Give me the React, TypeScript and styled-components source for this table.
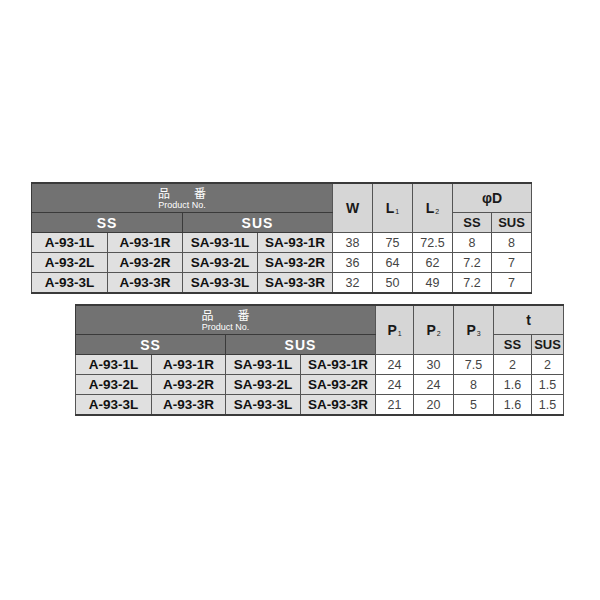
import styled, { createGlobalStyle } from "styled-components";

const GlobalStyle = createGlobalStyle`
  html, body {
    margin: 0;
    padding: 0;
    background: #ffffff;
  }
  body {
    font-family: "Liberation Sans", Arial, "Noto Sans CJK JP", sans-serif;
  }
`;

const Page = styled.div`
  width: 600px;
  height: 600px;
  padding: 182px 0 0 31px;
  box-sizing: border-box;
  display: flex;
  flex-direction: column;
  align-items: flex-start;
  gap: 10px;
`;

const Table = styled.table<{ $indent?: number; $width: number }>`
  border-collapse: collapse;
  table-layout: fixed;
  width: ${(p) => p.$width}px;
  margin-left: ${(p) => p.$indent ?? 0}px;
  border-top: 2px solid #3a3a3a;
  border-bottom: 2px solid #3a3a3a;
  border-right: 1px solid #555;
`;

const DarkHead = styled.th<{ $h?: number }>`
  background: #727272;
  color: #fff;
  height: ${(p) => p.$h ?? 19}px;
  padding: 0;
  font-weight: bold;
  font-size: 14px;
  letter-spacing: 1px;
  border-bottom: 1px solid #3a3a3a;
  border-left: 1px solid #3a3a3a;
  text-align: center;
  vertical-align: middle;
`;

const Title = styled.div`
  display: flex;
  flex-direction: column;
  align-items: center;
  gap: 1px;
`;

const Kanji = styled.div`
  display: flex;
  justify-content: center;
  gap: 24px;
  font-size: 12px;
  line-height: 12px;
  font-weight: normal;
  letter-spacing: 0;
  font-family: "Noto Sans CJK JP", sans-serif;
`;

const Sub = styled.span`
  font-size: 9px;
  line-height: 10px;
  font-weight: normal;
  letter-spacing: 0;
`;

const LightHead = styled.th<{ $h?: number; $small?: boolean }>`
  background: #d6d6d6;
  color: #1a1a1a;
  height: ${(p) => p.$h ?? 19}px;
  padding: 0;
  font-weight: bold;
  font-size: ${(p) => (p.$small ? 13 : 14)}px;
  border-left: 1px solid #555;
  border-bottom: 1px solid #555;
  text-align: center;
  vertical-align: middle;
`;

const Idx = styled.span`
  font-size: 7px;
  font-weight: normal;
  vertical-align: -1px;
  margin-left: 1px;
`;

const Code = styled.td`
  background: #e0e0e0;
  color: #111;
  font-weight: bold;
  font-size: 13.5px;
  height: 19px;
  padding: 0;
  text-align: center;
  border-left: 1px solid #555;
  border-bottom: 1px solid #555;
`;

const Value = styled.td`
  background: #fff;
  color: #444;
  font-size: 12.5px;
  height: 19px;
  padding: 0;
  text-align: center;
  border-left: 1px solid #555;
  border-bottom: 1px solid #555;
`;

type Row = { codes: string[]; values: string[] };

const rows1: Row[] = [
  { codes: ["A-93-1L", "A-93-1R", "SA-93-1L", "SA-93-1R"], values: ["38", "75", "72.5", "8", "8"] },
  { codes: ["A-93-2L", "A-93-2R", "SA-93-2L", "SA-93-2R"], values: ["36", "64", "62", "7.2", "7"] },
  { codes: ["A-93-3L", "A-93-3R", "SA-93-3L", "SA-93-3R"], values: ["32", "50", "49", "7.2", "7"] },
];

const rows2: Row[] = [
  { codes: ["A-93-1L", "A-93-1R", "SA-93-1L", "SA-93-1R"], values: ["24", "30", "7.5", "2", "2"] },
  { codes: ["A-93-2L", "A-93-2R", "SA-93-2L", "SA-93-2R"], values: ["24", "24", "8", "1.6", "1.5"] },
  { codes: ["A-93-3L", "A-93-3R", "SA-93-3L", "SA-93-3R"], values: ["21", "20", "5", "1.6", "1.5"] },
];

type Dim = { label: string; idx?: string };

function SpecTable({
  widths,
  dims,
  group,
  rows,
  indent,
}: {
  widths: number[];
  dims: Dim[];
  group: string;
  rows: Row[];
  indent?: number;
}) {
  const total = widths.reduce((a, b) => a + b, 0);
  return (
    <Table $indent={indent} $width={total}>
      <colgroup>
        {widths.map((w, i) => (
          <col key={i} style={{ width: w }} />
        ))}
      </colgroup>
      <thead>
        <tr>
          <DarkHead colSpan={4} $h={28}>
            <Title>
              <Kanji>
                <span>品</span>
                <span>番</span>
              </Kanji>
              <Sub>Product No.</Sub>
            </Title>
          </DarkHead>
          {dims.map((d) => (
            <LightHead key={d.label + d.idx} rowSpan={2}>
              {d.label}
              {d.idx && <Idx>{d.idx}</Idx>}
            </LightHead>
          ))}
          <LightHead colSpan={2}>{group}</LightHead>
        </tr>
        <tr>
          <DarkHead colSpan={2}>SS</DarkHead>
          <DarkHead colSpan={2}>SUS</DarkHead>
          <LightHead $small>SS</LightHead>
          <LightHead $small>SUS</LightHead>
        </tr>
      </thead>
      <tbody>
        {rows.map((r, i) => (
          <tr key={i}>
            {r.codes.map((c) => (
              <Code key={c}>{c}</Code>
            ))}
            {r.values.map((v, j) => (
              <Value key={j}>{v}</Value>
            ))}
          </tr>
        ))}
      </tbody>
    </Table>
  );
}

export default function App() {
  return (
    <>
      <GlobalStyle />
      <Page>
        <SpecTable
          widths={[76, 75, 75, 75, 40, 40, 40, 39, 40]}
          dims={[{ label: "W" }, { label: "L", idx: "1" }, { label: "L", idx: "2" }]}
          group="φD"
          rows={rows1}
        />
        <SpecTable
          indent={44}
          widths={[76, 74, 75, 75, 38, 40, 40, 38, 32]}
          dims={[
            { label: "P", idx: "1" },
            { label: "P", idx: "2" },
            { label: "P", idx: "3" },
          ]}
          group="t"
          rows={rows2}
        />
      </Page>
    </>
  );
}
